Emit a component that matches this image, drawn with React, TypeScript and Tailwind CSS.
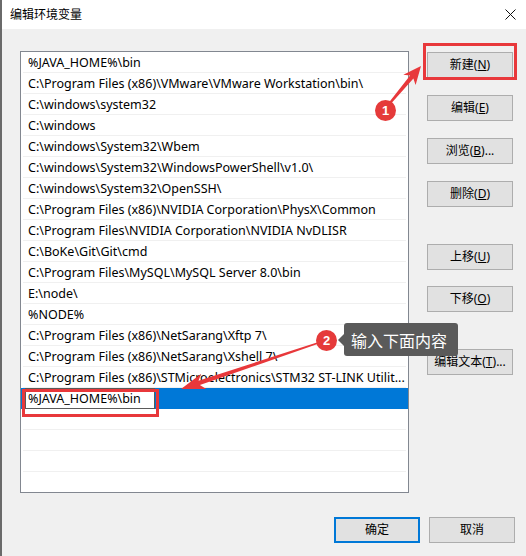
import React from 'react';

const paths = [
  '%JAVA_HOME%\\bin',
  'C:\\Program Files (x86)\\VMware\\VMware Workstation\\bin\\',
  'C:\\windows\\system32',
  'C:\\windows',
  'C:\\windows\\System32\\Wbem',
  'C:\\windows\\System32\\WindowsPowerShell\\v1.0\\',
  'C:\\windows\\System32\\OpenSSH\\',
  'C:\\Program Files (x86)\\NVIDIA Corporation\\PhysX\\Common',
  'C:\\Program Files\\NVIDIA Corporation\\NVIDIA NvDLISR',
  'C:\\BoKe\\Git\\Git\\cmd',
  'C:\\Program Files\\MySQL\\MySQL Server 8.0\\bin',
  'E:\\node\\',
  '%NODE%',
  'C:\\Program Files (x86)\\NetSarang\\Xftp 7\\',
  'C:\\Program Files (x86)\\NetSarang\\Xshell 7\\',
  'C:\\Program Files (x86)\\STMicroelectronics\\STM32 ST-LINK Utilit...',
];

const font = { fontFamily: '"Segoe UI", "Noto Sans", "Noto Sans CJK SC", sans-serif' };

// polygon for a tapered annotation arrow, tip at (tx,ty), tail at (sx,sy)
function arrowPoints(tx: number, ty: number, sx: number, sy: number, head: number, half: number, base: number, tail: number) {
  const dx = sx - tx;
  const dy = sy - ty;
  const len = Math.hypot(dx, dy);
  const ux = dx / len;
  const uy = dy / len;
  const nx = -uy;
  const ny = ux;
  const bx = tx + ux * head;
  const by = ty + uy * head;
  const nbx = tx + ux * head * 0.8;
  const nby = ty + uy * head * 0.8;
  const pts = [
    [tx, ty],
    [bx + nx * half, by + ny * half],
    [nbx + nx * base, nby + ny * base],
    [sx + nx * tail, sy + ny * tail],
    [sx - nx * tail, sy - ny * tail],
    [nbx - nx * base, nby - ny * base],
    [bx - nx * half, by - ny * half],
  ];
  return pts.map((p) => `${p[0].toFixed(1)},${p[1].toFixed(1)}`).join(' ');
}

const Btn = ({ label, k, tail = '', className = '' }: { label: string; k: string; tail?: string; className?: string }) => (
  <div className={`w-[86px] h-[26px] bg-[#e1e1e1] border border-[#adadad] flex items-center justify-center text-[12px] text-black ${className}`}>
    {label}(<span className="underline">{k}</span>){tail}
  </div>
);

export default function App() {
  return (
    <div className="relative w-[526px] h-[556px] flex flex-col bg-[#f0f0f0] border-l-2 border-[#6a6a6a] overflow-hidden" style={font}>
      <div className="h-[29px] bg-white flex items-center justify-between pl-[8px] pr-[10px] shrink-0">
        <span className="text-[12px] text-black">编辑环境变量</span>
        <svg width="11" height="11" viewBox="0 0 11 11">
          <path d="M0.5 0.5 L10.5 10.5 M10.5 0.5 L0.5 10.5" stroke="#111" strokeWidth="1" />
        </svg>
      </div>

      <div className="flex-1 flex flex-col pl-[18px] pt-[22px]">
        <div className="flex">
          <div className="w-[389px] h-[442px] border border-[#828790] bg-white flex flex-col">
            {paths.map((p) => (
              <div key={p} className="mx-[2px] h-[21px] shrink-0 border-b border-[#f0f0f0] pl-[5px] pt-[2px] flex items-center text-[12.5px] text-black whitespace-nowrap overflow-hidden">
                {p}
              </div>
            ))}
            <div className="h-[21px] shrink-0 bg-[#0078d7] flex">
              <div className="ml-[4px] w-[130px] h-[21px] bg-white border border-[#5a5a5a] pl-[2px] pt-[2px] flex items-center text-[12.5px] text-black">
                %JAVA_HOME%\bin
              </div>
            </div>
            {[0, 1, 2, 3].map((i) => (
              <div key={i} className={`mx-[2px] h-[21px] shrink-0 ${i < 3 ? 'border-b border-[#f0f0f0]' : ''}`} />
            ))}
          </div>

          <div className="ml-[18px] pt-[1px] flex flex-col">
            <Btn label="新建" k="N" />
            <Btn label="编辑" k="E" className="mt-[17px]" />
            <Btn label="浏览" k="B" tail="..." className="mt-[17px]" />
            <Btn label="删除" k="D" className="mt-[17px]" />
            <Btn label="上移" k="U" className="mt-[37px]" />
            <Btn label="下移" k="O" className="mt-[16px]" />
            <Btn label="编辑文本" k="T" tail="..." className="mt-[37px]" />
          </div>
        </div>

        <div className="flex justify-end gap-[9px] pr-[11px] mt-[24px]">
          <div className="w-[86px] h-[26px] bg-[#e1e1e1] border-2 border-[#0078d7] flex items-center justify-center text-[12px] text-black">确定</div>
          <div className="w-[86px] h-[26px] bg-[#e1e1e1] border border-[#adadad] flex items-center justify-center text-[12px] text-black">取消</div>
        </div>
      </div>

      {/* annotations */}
      <div className="absolute left-[421px] top-[43px] w-[94px] h-[37px] border-[3px] border-[#e8383b]" />
      <div className="absolute left-[20px] top-[389px] w-[137px] h-[28px] border-[3px] border-[#e8383b]" />

      <svg className="absolute left-0 top-0 pointer-events-none" width="526" height="556" viewBox="0 0 526 556">
        <polygon points={arrowPoints(419, 66, 388, 103, 18, 8, 2.2, 1.2)} fill="#e8383b" />
        <polygon points={arrowPoints(179, 389, 316, 343, 24, 8, 2.2, 0.8)} fill="#e8383b" />
      </svg>

      <div className="absolute left-[373px] top-[100px] w-[21px] h-[21px] rounded-full bg-[#e53a3a] flex items-center justify-center text-white text-[13px] font-bold" style={{ fontFamily: '"Liberation Sans", Arial, sans-serif' }}>1</div>
      <div className="absolute left-[314px] top-[330px] w-[21px] h-[21px] rounded-full bg-[#e53a3a] flex items-center justify-center text-white text-[13px] font-bold" style={{ fontFamily: '"Liberation Sans", Arial, sans-serif' }}>2</div>

      <div className="absolute left-[342px] top-[323px] w-[114px] h-[33px] rounded-[3px] bg-[#5a5a5a] flex items-center pl-[7px] text-white text-[16px]" style={{ fontFamily: '"Noto Sans CJK SC", sans-serif' }}>
        <div className="absolute left-[-6px] top-[11px] w-0 h-0 border-y-[6px] border-y-transparent border-r-[6px] border-r-[#5a5a5a]" />
        输入下面内容
      </div>
    </div>
  );
}
